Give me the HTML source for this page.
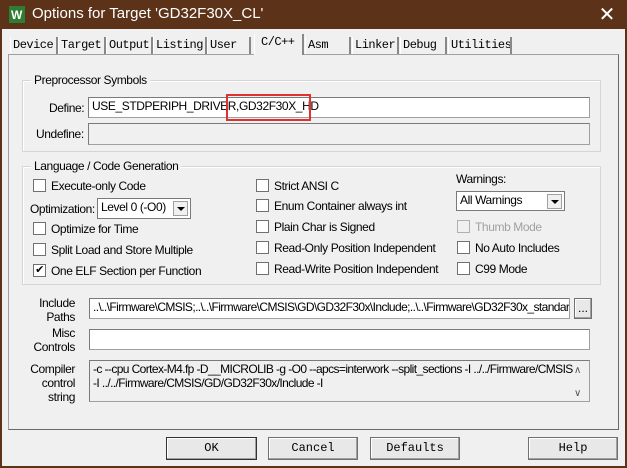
<!DOCTYPE html>
<html><head><meta charset="utf-8"><style>
*{box-sizing:border-box;margin:0;padding:0}
body{width:627px;height:468px;background:#5c3319;position:relative;overflow:hidden;font-family:"Liberation Sans",sans-serif;font-size:12px;color:#000;letter-spacing:-0.4px}
.a{position:absolute}
#win{left:2px;top:29px;width:623px;height:437px;background:#f0f0f0}
.title{left:32px;top:5px;color:#fff;font-size:15px;letter-spacing:0}
.tab{position:absolute;top:37px;height:17px;font-family:"Liberation Mono",monospace;font-size:12px;padding:1px 2px;border-right:2px solid #888;border-left:1px solid #fff;background:#f0f0f0;line-height:15px;letter-spacing:-0.5px;overflow:hidden;white-space:nowrap}
.panel{left:8px;top:54px;width:611px;height:376px;border:1px solid #a0a0a0;border-right-color:#696969;border-bottom-color:#696969;background:#f0f0f0}
.grp{border:1px solid #d5d5d5;box-shadow:inset 1px 1px 0 #fff}
.gl{background:#f0f0f0;padding:0 3px}
.inp{background:#fff;border:1px solid #a0a0a0;border-top-color:#7a7a7a;border-left-color:#7a7a7a;padding:1px 3px;white-space:nowrap;overflow:hidden}
.dis{background:#f0f0f0}
.cb{width:13px;height:13px;border:1px solid #707070;background:#fff}
.lbl{white-space:nowrap}
.btn{border:1px solid #707070;background:#e8e8e8;font-family:"Liberation Mono",monospace;text-align:center;line-height:21px;box-shadow:inset -1px -1px 0 #a0a0a0,inset 1px 1px 0 #fff;letter-spacing:0}
.sel{background:#fff;border:1px solid #7a7a7a;padding:1px 3px;white-space:nowrap}
.arr{position:absolute;right:2px;top:2px;width:15px;height:15px;border:1px solid #a0a0a0;background:#f0f0f0}
.arr:after{content:"";position:absolute;left:3px;top:5px;border:4px solid transparent;border-top:4px solid #000;border-bottom:0}
</style></head><body>
<svg class="a" style="left:9px;top:6px" width="16" height="17"><rect width="16" height="17" fill="#2e7d32"/><text x="2" y="13" fill="#fff" font-size="12" font-weight="bold" font-family="Liberation Sans">W</text></svg>
<div class="a title">Options for Target 'GD32F30X_CL'</div>
<div class="a" style="right:12px;top:2px;color:#fff;font-size:20px">✕</div>
<div id="win" class="a"></div>
<div class="a panel"></div>
<div class="tab" style="left:10px;width:48px">Device</div>
<div class="tab" style="left:58px;width:48px">Target</div>
<div class="tab" style="left:106px;width:47px">Output</div>
<div class="tab" style="left:153px;width:54px">Listing</div>
<div class="tab" style="left:207px;width:44px">User</div>
<div class="tab" style="left:254px;top:34px;height:21px;border-bottom:0;padding-left:6px;width:50px">C/C++</div>
<div class="tab" style="left:305px;width:46px">Asm</div>
<div class="tab" style="left:352px;width:47px">Linker</div>
<div class="tab" style="left:400px;width:47px">Debug</div>
<div class="tab" style="left:448px;width:64px">Utilities</div>

<div class="a grp" style="left:22px;top:80px;width:579px;height:72px"></div>
<div class="a gl" style="left:31px;top:73px">Preprocessor Symbols</div>
<div class="a lbl" style="left:49px;top:101px">Define:</div>
<div class="a inp" style="left:88px;top:97px;width:502px;height:21px">USE_STDPERIPH_DRIVER,GD32F30X_HD</div>
<div class="a" style="left:226px;top:94px;width:85px;height:27px;border:2px solid #e03030"></div>
<div class="a lbl" style="left:36px;top:127px">Undefine:</div>
<div class="a inp dis" style="left:88px;top:123px;width:502px;height:22px"></div>

<div class="a grp" style="left:22px;top:166px;width:579px;height:119px"></div>
<div class="a gl" style="left:31px;top:159px">Language / Code Generation</div>
<div class="a cb" style="left:33px;top:179px"></div><div class="a lbl" style="left:51px;top:179px">Execute-only Code</div>
<div class="a lbl" style="left:30px;top:202px">Optimization:</div>
<div class="a sel" style="left:97px;top:198px;width:94px;height:21px">Level 0 (-O0)<div class="arr"></div></div>
<div class="a cb" style="left:33px;top:222px"></div><div class="a lbl" style="left:51px;top:222px">Optimize for Time</div>
<div class="a cb" style="left:33px;top:243px"></div><div class="a lbl" style="left:51px;top:243px">Split Load and Store Multiple</div>
<div class="a cb" style="left:33px;top:264px;font-size:11px;line-height:10px;text-align:center">✔</div><div class="a lbl" style="left:51px;top:264px">One ELF Section per Function</div>

<div class="a cb" style="left:256px;top:179px"></div><div class="a lbl" style="left:274px;top:179px">Strict ANSI C</div>
<div class="a cb" style="left:256px;top:199px"></div><div class="a lbl" style="left:274px;top:199px">Enum Container always int</div>
<div class="a cb" style="left:256px;top:220px"></div><div class="a lbl" style="left:274px;top:220px">Plain Char is Signed</div>
<div class="a cb" style="left:256px;top:241px"></div><div class="a lbl" style="left:274px;top:241px">Read-Only Position Independent</div>
<div class="a cb" style="left:256px;top:262px"></div><div class="a lbl" style="left:274px;top:262px">Read-Write Position Independent</div>
<div class="a lbl" style="left:456px;top:172px">Warnings:</div>
<div class="a sel" style="left:456px;top:191px;width:109px;height:20px">All Warnings<div class="arr"></div></div>
<div class="a cb" style="left:457px;top:220px;border-color:#b0b0b0;background:#f0f0f0"></div><div class="a lbl" style="left:475px;top:220px;color:#a0a0a0">Thumb Mode</div>
<div class="a cb" style="left:457px;top:241px"></div><div class="a lbl" style="left:475px;top:241px">No Auto Includes</div>
<div class="a cb" style="left:457px;top:262px"></div><div class="a lbl" style="left:475px;top:262px">C99 Mode</div>

<div class="a lbl" style="left:20px;top:296px;width:55px;text-align:right;line-height:14px">Include<br>Paths</div>
<div class="a inp" style="left:89px;top:298px;width:481px;height:21px;letter-spacing:-0.6px">..\..\Firmware\CMSIS;..\..\Firmware\CMSIS\GD\GD32F30x\Include;..\..\Firmware\GD32F30x_standard</div>
<div class="a btn" style="left:574px;top:298px;width:18px;height:21px;font-family:'Liberation Sans';line-height:18px">...</div>
<div class="a lbl" style="left:20px;top:326px;width:55px;text-align:right;line-height:14px">Misc<br>Controls</div>
<div class="a inp" style="left:89px;top:329px;width:501px;height:21px"></div>
<div class="a lbl" style="left:20px;top:362px;width:55px;text-align:right;line-height:14px">Compiler<br>control<br>string</div>
<div class="a inp dis" style="left:89px;top:360px;width:501px;height:42px;line-height:14px;letter-spacing:-0.6px;padding-right:22px">-c --cpu Cortex-M4.fp -D__MICROLIB -g -O0 --apcs=interwork --split_sections -I ../../Firmware/CMSIS<br>-I ../../Firmware/CMSIS/GD/GD32F30x/Include -I</div>
<div class="a" style="left:574px;top:365px;color:#555;font-size:10px">&#8743;</div>
<div class="a" style="left:574px;top:388px;color:#555;font-size:10px">&#8744;</div>

<div class="a btn" style="left:166px;top:437px;width:91px;height:23px;border-color:#333">OK</div>
<div class="a btn" style="left:268px;top:437px;width:90px;height:23px">Cancel</div>
<div class="a btn" style="left:370px;top:437px;width:90px;height:23px">Defaults</div>
<div class="a btn" style="left:528px;top:437px;width:90px;height:23px">Help</div>
</body></html>
